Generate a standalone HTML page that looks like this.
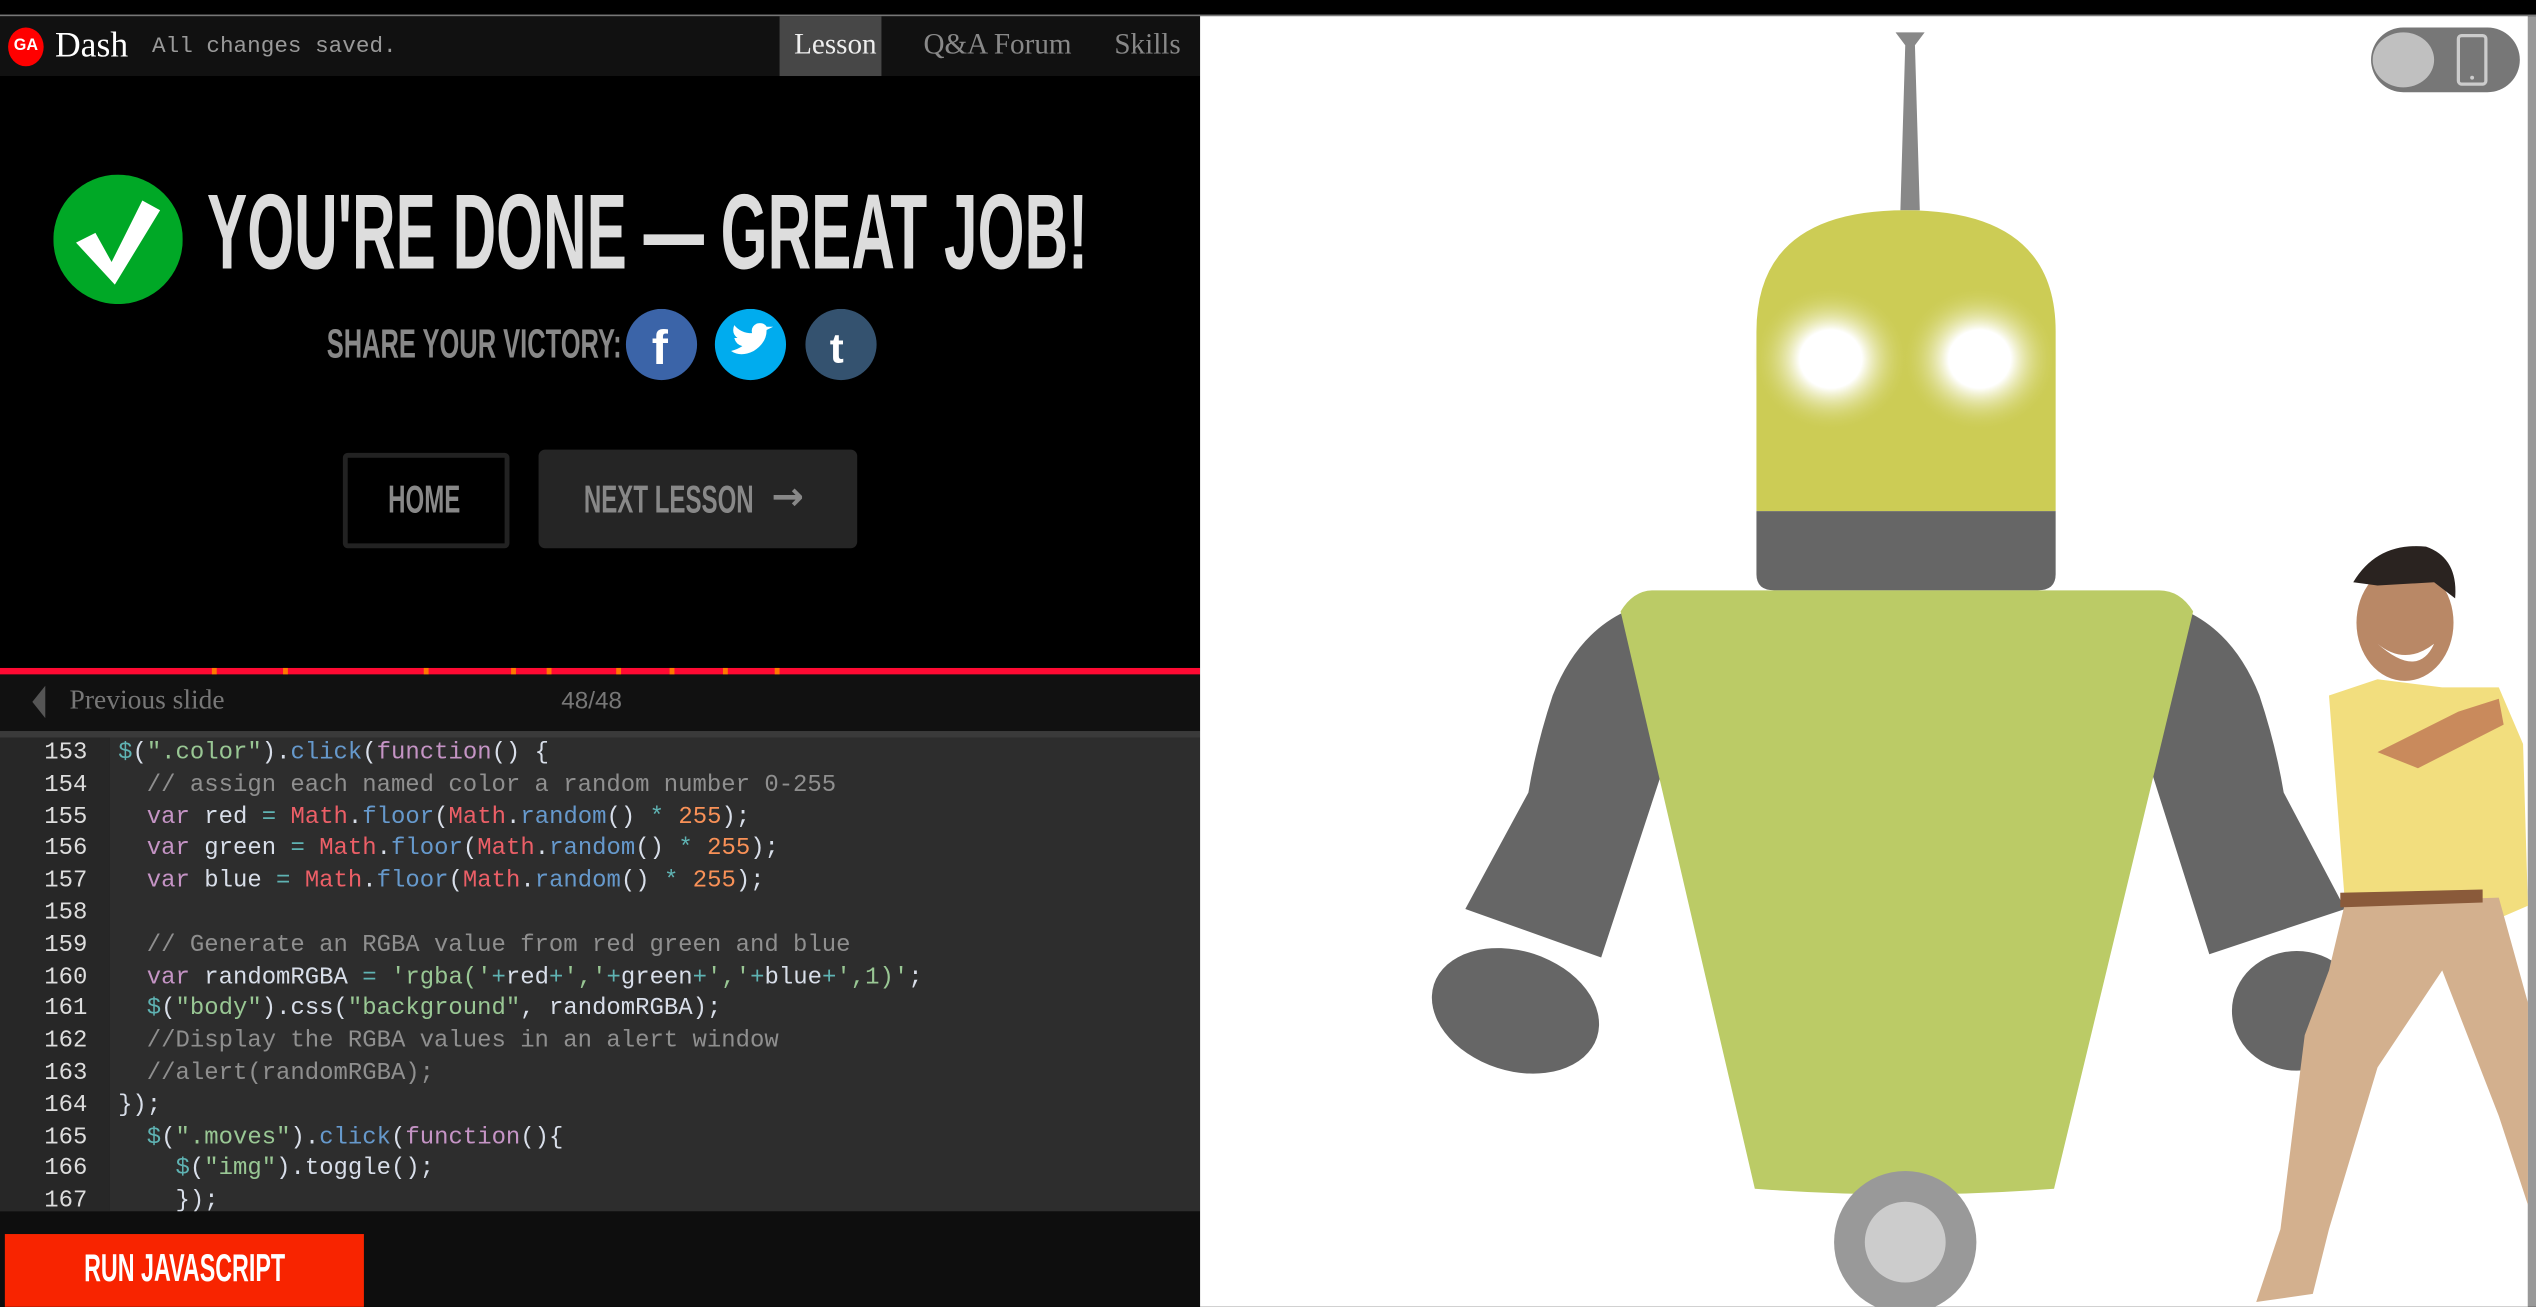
<!DOCTYPE html>
<html><head><meta charset="utf-8"><style>
*{margin:0;padding:0;box-sizing:border-box}
html,body{width:2536px;height:1306px;overflow:hidden;background:#000}
#w{position:absolute;left:0;top:0;width:1568px;height:808px;transform:scale(1.61735);transform-origin:0 0;background:#000;font-family:"Liberation Sans",sans-serif}
.a{position:absolute}
.cond{display:inline-block;transform-origin:0 0;white-space:nowrap;font-weight:bold}
.code{font-family:"Liberation Mono",monospace;font-size:14.8px;line-height:19.8px;color:#d8dee9;white-space:pre}
.k{color:#c594c5}.m{color:#ec5f67}.f{color:#6699cc}.n{color:#f99157}.o{color:#5fb3b3}.s{color:#99c794}.c{color:#8f8f8f}
</style></head><body><div id="w">
<div class="a" style="left:0;top:9px;width:742px;height:38px;background:#111"></div>
<div class="a" style="left:0;top:9px;width:1568px;height:1px;background:#777"></div>
<div class="a" style="left:5px;top:17px;width:22px;height:24px;border-radius:50%;background:#f00;color:#fff;font:bold 10px 'Liberation Sans';text-align:center;line-height:24px">GA</div>
<div class="a" style="left:34px;top:15px;font:22px 'Liberation Serif',serif;color:#fff">Dash</div>
<div class="a" style="left:94px;top:21px;font:14px 'Liberation Mono',monospace;color:#999">All changes saved.</div>
<div class="a" style="left:482px;top:10px;width:63px;height:37px;background:#474747"></div>
<div class="a" style="left:491px;top:17px;font:18px 'Liberation Serif',serif;color:#eee">Lesson</div>
<div class="a" style="left:571px;top:17px;font:18px 'Liberation Serif',serif;color:#888">Q&amp;A Forum</div>
<div class="a" style="left:689px;top:17px;font:18px 'Liberation Serif',serif;color:#888">Skills</div>
<svg class="a" style="left:33px;top:108px" width="80" height="80"><circle cx="40" cy="40" r="40" fill="#00a826"/><path d="M14 42 L26 36 L36 54 L55 16 L66 22 L38 68 Z" fill="#fff"/></svg>
<div class="a" style="left:128px;top:105px"><span class="cond" style="font-size:66px;color:#ddd;transform:scaleX(0.565)">YOU'RE DONE — GREAT JOB!</span></div>
<div class="a" style="left:202px;top:199px"><span class="cond" style="font-size:25px;color:#888;transform:scaleX(0.63)">SHARE YOUR VICTORY:</span></div>
<svg class="a" style="left:386px;top:191px" width="160" height="45"><circle cx="23" cy="22" r="22" fill="#3b64a8"/><text x="17" y="34" font-family="Liberation Sans" font-weight="bold" font-size="30" fill="#fff">f</text><circle cx="78" cy="22" r="22" fill="#00acee"/><path d="M66 26 Q72 30 80 26 Q88 21 88 13 L92 11 L88 11 Q86 8 82 9 Q78 11 79 15 Q72 15 68 10 Q66 15 70 18 L68 18 Q69 22 73 23 Q70 25 66 26Z" fill="#fff"/><circle cx="134" cy="22" r="22" fill="#34526f"/><text x="127" y="33" font-family="Liberation Sans" font-weight="bold" font-size="26" fill="#fff">t</text></svg>
<div class="a" style="left:212px;top:280px;width:103px;height:59px;border:3px solid #222;border-radius:3px"></div>
<div class="a" style="left:240px;top:296px"><span class="cond" style="font-size:24px;color:#888;transform:scaleX(0.62)">HOME</span></div>
<div class="a" style="left:333px;top:278px;width:197px;height:61px;background:#252525;border-radius:4px"></div>
<div class="a" style="left:361px;top:296px"><span class="cond" style="font-size:24px;color:#888;transform:scaleX(0.62)">NEXT LESSON</span></div>
<div class="a" style="left:477px;top:293px;font:bold 24px 'DejaVu Sans',sans-serif;color:#888">→</div>
<div class="a" style="left:0;top:413px;width:742px;height:4px;background:#ff0a33"></div>
<div class="a" style="left:131px;top:413px;width:3px;height:4px;background:#f70"></div>
<div class="a" style="left:175px;top:413px;width:3px;height:4px;background:#f70"></div>
<div class="a" style="left:262px;top:413px;width:3px;height:4px;background:#f70"></div>
<div class="a" style="left:316px;top:413px;width:3px;height:4px;background:#f70"></div>
<div class="a" style="left:338px;top:413px;width:3px;height:4px;background:#f70"></div>
<div class="a" style="left:381px;top:413px;width:3px;height:4px;background:#f70"></div>
<div class="a" style="left:414px;top:413px;width:3px;height:4px;background:#f70"></div>
<div class="a" style="left:447px;top:413px;width:3px;height:4px;background:#f70"></div>
<div class="a" style="left:479px;top:413px;width:3px;height:4px;background:#f70"></div>
<div class="a" style="left:0;top:417px;width:742px;height:35px;background:#111"></div>
<div class="a" style="left:20px;top:424px;width:0;height:0;border-top:10px solid transparent;border-bottom:10px solid transparent;border-right:8px solid #555"></div>
<div class="a" style="left:43px;top:423px;font:17px 'Liberation Serif',serif;color:#777">Previous slide</div>
<div class="a" style="left:347px;top:425px;font:15px 'Liberation Sans',sans-serif;color:#777">48/48</div>
<div class="a" style="left:0;top:452px;width:742px;height:297px;background:#2d2d2d;border-top:4px solid #3a3a3a;overflow:hidden">
<div class="a" style="left:0;top:0;width:68px;height:297px;background:#272727"></div>
<div class="a code" style="left:0;top:1px;width:54px;text-align:right;color:#ddd">153
154
155
156
157
158
159
160
161
162
163
164
165
166
167</div>
<div class="a code" style="left:73px;top:1px"><span class="o">$</span>(<span class="s">".color"</span>).<span class="f">click</span>(<span class="k">function</span>() {
  <span class="c">// assign each named color a random number 0-255</span>
  <span class="k">var</span> red <span class="o">=</span> <span class="m">Math</span>.<span class="f">floor</span>(<span class="m">Math</span>.<span class="f">random</span>() <span class="o">*</span> <span class="n">255</span>);
  <span class="k">var</span> green <span class="o">=</span> <span class="m">Math</span>.<span class="f">floor</span>(<span class="m">Math</span>.<span class="f">random</span>() <span class="o">*</span> <span class="n">255</span>);
  <span class="k">var</span> blue <span class="o">=</span> <span class="m">Math</span>.<span class="f">floor</span>(<span class="m">Math</span>.<span class="f">random</span>() <span class="o">*</span> <span class="n">255</span>);

  <span class="c">// Generate an RGBA value from red green and blue</span>
  <span class="k">var</span> randomRGBA <span class="o">=</span> <span class="s">'rgba('</span><span class="o">+</span>red<span class="o">+</span><span class="s">','</span><span class="o">+</span>green<span class="o">+</span><span class="s">','</span><span class="o">+</span>blue<span class="o">+</span><span class="s">',1)'</span>;
  <span class="o">$</span>(<span class="s">"body"</span>).css(<span class="s">"background"</span>, randomRGBA);
  <span class="c">//Display the RGBA values in an alert window</span>
  <span class="c">//alert(randomRGBA);</span>
});
  <span class="o">$</span>(<span class="s">".moves"</span>).<span class="f">click</span>(<span class="k">function</span>(){
    <span class="o">$</span>(<span class="s">"img"</span>).toggle();
    });</div>
</div>
<div class="a" style="left:0;top:749px;width:742px;height:59px;background:#0e0e0e"></div>
<div class="a" style="left:3px;top:763px;width:222px;height:45px;background:#f82400"></div>
<div class="a" style="left:52px;top:771px"><span class="cond" style="font-size:24px;color:#fff;transform:scaleX(0.6)">RUN JAVASCRIPT</span></div>
<div class="a" style="left:742px;top:10px;width:821px;height:798px;background:#fff"></div>
<div class="a" style="left:1563px;top:10px;width:5px;height:798px;background:#999"></div>
<svg class="a" style="left:742px;top:0" width="826" height="808" viewBox="742 0 826 808">
<defs><radialGradient id="e"><stop offset="0.4" stop-color="#fff"/><stop offset="1" stop-color="#cccc55" stop-opacity="0"/></radialGradient></defs>
<path d="M1172 20 L1190 20 L1184 28 L1187 130 L1175 130 L1178 28 Z" fill="#888"/>
<path d="M1086 316 L1086 205 Q1086 130 1178 130 Q1271 130 1271 205 L1271 316 Z" fill="#cccc55"/>
<path d="M1086 316 L1271 316 L1271 355 Q1271 365 1260 365 L1097 365 Q1086 365 1086 355 Z" fill="#666"/>
<ellipse cx="1132" cy="222" rx="48" ry="45" fill="url(#e)"/>
<ellipse cx="1224" cy="222" rx="48" ry="45" fill="url(#e)"/>
<path d="M1005 378 Q975 392 960 430 Q950 460 945 490 L906 562 L990 592 L1030 470 Z" fill="#666"/>
<path d="M1352 378 Q1382 392 1397 430 Q1407 460 1412 490 L1450 562 L1366 590 L1328 470 Z" fill="#666"/>
<ellipse cx="937" cy="625" rx="53" ry="37" transform="rotate(18 937 625)" fill="#666"/>
<ellipse cx="1420" cy="625" rx="40" ry="37" fill="#666"/>
<path d="M1002 378 Q1010 365 1022 365 L1335 365 Q1348 365 1356 378 L1270 735 Q1178 742 1085 735 Z" fill="#bbcb66"/>
<circle cx="1178" cy="768" r="44" fill="#999"/><circle cx="1178" cy="768" r="25" fill="#ccc"/>
<path d="M1440 430 L1470 420 L1510 425 L1545 425 L1560 460 L1563 560 L1540 570 L1450 560 Z" fill="#f2de7e"/>
<path d="M1470 465 L1520 440 L1545 432 L1548 448 L1495 475 Z" fill="#c98a5c"/>
<path d="M1450 558 L1545 555 L1563 620 L1563 745 L1545 690 L1510 600 L1470 660 L1440 760 L1430 800 L1395 805 L1410 760 L1425 640 L1440 600 Z" fill="#d3b08e"/>
<path d="M1447 552 L1535 550 L1535 558 L1447 561 Z" fill="#8a5a3a"/>
<ellipse cx="1487" cy="385" rx="30" ry="36" fill="#b98866"/>
<path d="M1455 360 Q1470 335 1500 338 Q1520 345 1518 370 L1505 360 L1470 362 Z" fill="#2a2320"/>
<path d="M1470 398 Q1487 412 1505 398 Q1495 420 1470 398Z" fill="#fff"/>
<rect x="1466" y="17" width="92" height="40" rx="20" fill="#777"/>
<ellipse cx="1486" cy="37" rx="19" ry="17" fill="#c0c0c0"/>
<rect x="1520" y="22" width="17" height="30" rx="2" fill="none" stroke="#ccc" stroke-width="2"/>
<circle cx="1528.5" cy="48" r="1.2" fill="#ccc"/>
</svg>
</div></body></html>
